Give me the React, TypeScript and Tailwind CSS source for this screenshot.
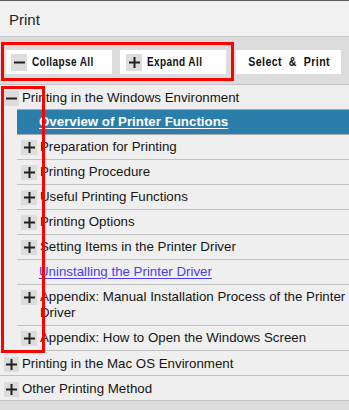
import React from "react";

function Minus({ big }: { big?: boolean }) {
  return (
    <span
      className={
        big
          ? "flex h-[17px] w-[16px] shrink-0 items-center justify-center bg-[#dcdcdc]"
          : "flex h-[15px] w-[15px] shrink-0 items-center justify-center bg-[#dcdcdc]"
      }
    >
      <svg width="11" height="11" viewBox="0 0 11 11">
        <rect x="0" y="4.5" width="11" height="2" fill="#222" />
      </svg>
    </span>
  );
}

function Plus({ big, wide }: { big?: boolean; wide?: boolean }) {
  return (
    <span
      className={
        big
          ? "flex h-[17px] w-[16px] shrink-0 items-center justify-center bg-[#dcdcdc]"
          : wide
          ? "flex h-[15px] w-[16px] shrink-0 items-center justify-center bg-[#dcdcdc]"
          : "flex h-[15px] w-[15px] shrink-0 items-center justify-center bg-[#dcdcdc]"
      }
    >
      <svg width="11" height="11" viewBox="0 0 11 11">
        <rect x="0" y="4.5" width="11" height="2" fill="#222" />
        <rect x="4.5" y="0" width="2" height="11" fill="#222" />
      </svg>
    </span>
  );
}

function Child({ label, dark }: { label: string; dark?: boolean }) {
  return (
    <div
      className={
        "flex items-start border-t py-[4px] pl-[4px] pr-0 leading-[16px] " +
        (dark ? "border-[#a9a9a9]" : "border-[#c2c2c2]")
      }
    >
      <span className="mt-[1px]">
        <Plus wide />
      </span>
      <span className="ml-[3px]">{label}</span>
    </div>
  );
}

export default function App() {
  const btnFont =
    "font-['Liberation_Sans',Arial,sans-serif] font-bold text-[12.5px] tracking-[0.5px] text-[#111] whitespace-nowrap inline-block";
  return (
    <div className="relative h-[410px] w-[349px] overflow-hidden bg-[#dcdcdc] font-['Liberation_Sans',Arial,sans-serif] text-[13.3px] text-[#151515]">
      {/* Header */}
      <div className="flex h-[36px] items-center border-t border-[#5a5a5a] bg-[#f0f0f0] pl-[9px] pt-[3px] text-[15px] text-[#222]">
        Print
      </div>
      {/* Toolbar */}
      <div className="h-[49px] border-y border-[#c4c4c4] bg-[#dcdcdc] pl-[6px] pt-[13px]">
        <div className="flex">
          <div className="flex h-[24px] w-[106px] items-center bg-white pl-[5px]">
            <Minus big />
            <span className={"ml-[5px] origin-left scale-x-[0.8] " + btnFont}>Collapse All</span>
          </div>
          <div className="ml-[8px] flex h-[24px] w-[106px] items-center bg-white pl-[6px]">
            <Plus big />
            <span className={"ml-[5px] origin-left scale-x-[0.8] " + btnFont}>Expand All</span>
          </div>
          <div className="ml-[10px] flex h-[24px] w-[105px] items-center justify-center bg-white pl-[1px]">
            <span className={"origin-center scale-x-[0.85] [word-spacing:4px] " + btnFont}>
              Select &amp; Print
            </span>
          </div>
        </div>
      </div>
      {/* Tree */}
      <div className="bg-[#efefef]">
        <div className="border-b border-[#c2c2c2]">
          <div className="flex h-[24px] items-center pl-[4px] pt-[1px]">
            <span className="mt-[1px]">
              <Minus />
            </span>
            <span className="ml-[3px]">Printing in the Windows Environment</span>
          </div>
          <div className="ml-[17px]">
            <div className="border-t border-[#a9a9a9] bg-[#2b7eaa] pl-[22px] font-bold leading-[24px] text-white underline underline-offset-[2px]">
              Overview of Printer Functions
            </div>
            <Child label="Preparation for Printing" dark />
            <Child label="Printing Procedure" />
            <Child label="Useful Printing Functions" />
            <Child label="Printing Options" />
            <Child label="Setting Items in the Printer Driver" />
            <div className="border-t border-[#c2c2c2] py-[4px] pl-[22px] leading-[16px]">
              <span className="text-[#4a3cf0] underline underline-offset-[2px]">
                Uninstalling the Printer Driver
              </span>
            </div>
            <Child label="Appendix: Manual Installation Process of the Printer Driver" />
            <Child label="Appendix: How to Open the Windows Screen" />
          </div>
        </div>
        <div className="flex h-[25px] items-center border-b border-[#c2c2c2] pl-[4px] pt-[1px]">
          <span className="mt-[1px]">
            <Plus />
          </span>
          <span className="ml-[3px]">Printing in the Mac OS Environment</span>
        </div>
        <div className="flex h-[25px] items-center border-b border-[#c2c2c2] pl-[4px] pt-[1px]">
          <span className="mt-[1px]">
            <Plus />
          </span>
          <span className="ml-[3px]">Other Printing Method</span>
        </div>
      </div>

      {/* Red annotation boxes */}
      <div className="pointer-events-none absolute left-[1px] top-[42px] h-[39px] w-[233px] border-[3px] border-[#ff0000]" />
      <div className="pointer-events-none absolute left-[1px] top-[86px] h-[267px] w-[44px] border-[3px] border-[#ff0000]" />
    </div>
  );
}
